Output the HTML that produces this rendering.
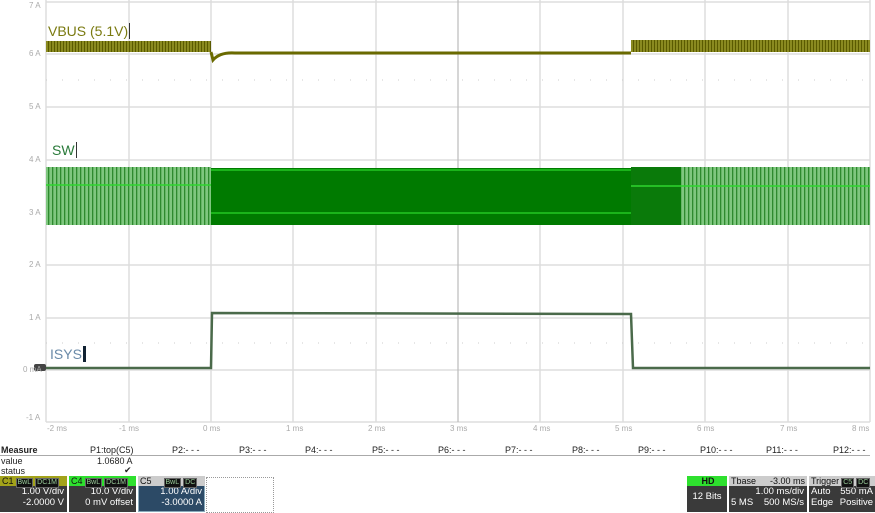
<!DOCTYPE html>
<html><head><meta charset="utf-8"><style>
body{margin:0;width:875px;height:512px;background:#fff;overflow:hidden;font-family:"Liberation Sans",sans-serif;position:relative}
.t{position:absolute;white-space:nowrap}
.ax{font-size:8px;color:#aaa}
.m{font-size:9px;color:#222}
.box{position:absolute;top:476px;height:36px;background:#3a3a3a;color:#fff;font-size:9px}
.hd{height:10px;font-size:9px;line-height:10px;padding-left:2px;color:#111;position:relative}
.bd{text-align:right;padding-right:3px;line-height:11px;font-size:9.5px}
.bg{display:inline-block;background:#111;color:#9c9;font-size:7px;line-height:8px;padding:0 1px;margin-left:2px;border:1px solid #666}
</style></head><body>
<svg width="875" height="440" style="position:absolute;left:0;top:0">
<defs>
<pattern id="sw" width="4" height="60" patternUnits="userSpaceOnUse"><rect width="4" height="60" fill="#7fc77f"/><rect x="0" width="1.3" height="60" fill="#2e8a2e"/></pattern>
<pattern id="vb" width="3" height="14" patternUnits="userSpaceOnUse"><rect width="3" height="14" fill="#8a8a20"/><rect x="0" width="1" height="14" fill="#5a5a00"/></pattern>
</defs>
<g stroke="#ddd" stroke-width="1.5">
<line x1="46" y1="2" x2="870" y2="2"/><line x1="46" y1="54" x2="870" y2="54"/><line x1="46" y1="107" x2="870" y2="107"/><line x1="46" y1="160" x2="870" y2="160"/><line x1="46" y1="213" x2="870" y2="213"/><line x1="46" y1="265" x2="870" y2="265"/><line x1="46" y1="318" x2="870" y2="318"/><line x1="46" y1="370" x2="870" y2="370"/><line x1="46" y1="422" x2="870" y2="422"/>
<line x1="46" y1="0" x2="46" y2="422"/><line x1="129" y1="0" x2="129" y2="422"/><line x1="211" y1="0" x2="211" y2="422"/><line x1="293" y1="0" x2="293" y2="422"/><line x1="376" y1="0" x2="376" y2="422"/><line x1="540" y1="0" x2="540" y2="422"/><line x1="623" y1="0" x2="623" y2="422"/><line x1="705" y1="0" x2="705" y2="422"/><line x1="788" y1="0" x2="788" y2="422"/><line x1="870" y1="0" x2="870" y2="422"/>
</g>
<line x1="458" y1="0" x2="458" y2="422" stroke="#bbb" stroke-width="1.2"/>
<line x1="46" y1="80" x2="870" y2="80" stroke="#ccc" stroke-dasharray="1 15"/>
<line x1="46" y1="343" x2="870" y2="343" stroke="#ccc" stroke-dasharray="1 15"/>
<!-- VBUS -->
<rect x="46" y="41" width="165" height="11" fill="url(#vb)"/>
<path d="M211 52 L213 60 Q220 52 235 53 L631 53" stroke="#6a6a00" stroke-width="3" fill="none"/>
<rect x="631" y="40" width="239" height="12" fill="url(#vb)"/>
<!-- SW -->
<rect x="46" y="167" width="165" height="58" fill="url(#sw)"/>
<line x1="46" y1="185" x2="211" y2="185" stroke="#2ed62e" stroke-width="1.5"/>
<rect x="211" y="168" width="420" height="57" fill="#007a00"/>
<line x1="211" y1="170" x2="631" y2="170" stroke="#22c822" stroke-width="1.5"/>
<line x1="211" y1="213" x2="631" y2="213" stroke="#22c822" stroke-width="1.5"/>
<rect x="631" y="167" width="50" height="58" fill="#0a7a0a"/>
<rect x="681" y="167" width="189" height="58" fill="url(#sw)"/>
<line x1="631" y1="186" x2="870" y2="186" stroke="#2ed62e" stroke-width="1.5"/>
<!-- ISYS -->
<path d="M46 368 L211 368 L212 313 L631 314 L633 368 L870 368" stroke="#4a6a4a" stroke-width="2.5" fill="none"/>
<rect x="34" y="364" width="12" height="7" rx="2" fill="#444"/>
</svg>
<div class="t" style="left:48px;top:23px;font-size:14px;color:#7a7a10">VBUS (5.1V)<span style="border-left:1px solid #333;margin-left:1px"></span></div>
<div class="t" style="left:52px;top:142px;font-size:14px;color:#2a7a3a">SW<span style="border-left:1px solid #333;margin-left:1px"></span></div>
<div class="t" style="left:50px;top:346px;font-size:14px;color:#6a8aa8">ISYS<span style="border-left:3px solid #123;margin-left:1px"></span></div>
<div class="t ax" style="left:29px;top:1px">7 A</div><div class="t ax" style="left:29px;top:49px">6 A</div><div class="t ax" style="left:29px;top:102px">5 A</div><div class="t ax" style="left:29px;top:155px">4 A</div><div class="t ax" style="left:29px;top:208px">3 A</div><div class="t ax" style="left:29px;top:260px">2 A</div><div class="t ax" style="left:29px;top:313px">1 A</div><div class="t ax" style="left:23px;top:365px">0 mA</div><div class="t ax" style="left:26px;top:413px">-1 A</div>
<div class="t ax" style="left:47px;top:424px">-2 ms</div><div class="t ax" style="left:119px;top:424px">-1 ms</div><div class="t ax" style="left:203px;top:424px">0 ms</div><div class="t ax" style="left:286px;top:424px">1 ms</div><div class="t ax" style="left:368px;top:424px">2 ms</div><div class="t ax" style="left:450px;top:424px">3 ms</div><div class="t ax" style="left:533px;top:424px">4 ms</div><div class="t ax" style="left:615px;top:424px">5 ms</div><div class="t ax" style="left:697px;top:424px">6 ms</div><div class="t ax" style="left:780px;top:424px">7 ms</div><div class="t ax" style="left:852px;top:424px">8 ms</div>
<div style="position:absolute;left:0;top:455px;width:870px;border-top:1px solid #aaa"></div>
<div class="t m" style="left:1px;top:445px;font-weight:bold">Measure</div>
<div class="t m" style="left:90px;top:445px">P1:top(C5)</div>
<div class="t m" style="left:172px;top:445px">P2:- - -</div><div class="t m" style="left:239px;top:445px">P3:- - -</div><div class="t m" style="left:305px;top:445px">P4:- - -</div><div class="t m" style="left:372px;top:445px">P5:- - -</div><div class="t m" style="left:438px;top:445px">P6:- - -</div><div class="t m" style="left:505px;top:445px">P7:- - -</div><div class="t m" style="left:572px;top:445px">P8:- - -</div><div class="t m" style="left:638px;top:445px">P9:- - -</div><div class="t m" style="left:700px;top:445px">P10:- - -</div><div class="t m" style="left:766px;top:445px">P11:- - -</div><div class="t m" style="left:833px;top:445px">P12:- - -</div>
<div class="t m" style="left:1px;top:456px">value</div><div class="t m" style="left:97px;top:456px">1.0680 A</div>
<div class="t m" style="left:1px;top:466px">status</div><div class="t m" style="left:124px;top:465px">✔</div>
<div class="box" style="left:0;width:67px"><div class="hd" style="background:#a3a31a">C1<span class="bg">BwL</span><span class="bg">DC1M</span></div><div class="bd">1.00 V/div<br>-2.0000 V</div></div>
<div class="box" style="left:69px;width:67px"><div class="hd" style="background:#2ee02e">C4<span class="bg">BwL</span><span class="bg">DC1M</span></div><div class="bd">10.0 V/div<br>0 mV offset</div></div>
<div class="box" style="left:138px;width:67px;background:#2c4a66;box-shadow:inset 0 0 0 1px #8ab"><div class="hd" style="background:#ccc">C5<span class="bg" style="margin-left:12px">BwL</span><span class="bg">DC</span></div><div class="bd">1.00 A/div<br>-3.0000 A</div></div>
<div style="position:absolute;left:206px;top:477px;width:66px;height:34px;border:1px dotted #999"></div>
<div class="box" style="left:687px;width:40px"><div class="hd" style="background:#2ee02e;text-align:center;font-weight:bold">HD</div><div class="bd" style="text-align:center;padding:5px 0 0">12 Bits</div></div>
<div class="box" style="left:729px;width:78px"><div class="hd" style="background:#ccc">Tbase<span style="float:right;padding-right:2px">-3.00 ms</span></div><div class="bd">1.00 ms/div<br><span style="float:left;padding-left:2px">5 MS</span>500 MS/s</div></div>
<div class="box" style="left:809px;width:66px"><div class="hd" style="background:#ccc">Trigger<span class="bg">C5</span><span class="bg">DC</span></div><div class="bd" style="padding-right:2px"><span style="float:left;padding-left:2px">Auto</span>550 mA<br><span style="float:left;padding-left:2px">Edge</span>Positive</div></div>
</body></html>
